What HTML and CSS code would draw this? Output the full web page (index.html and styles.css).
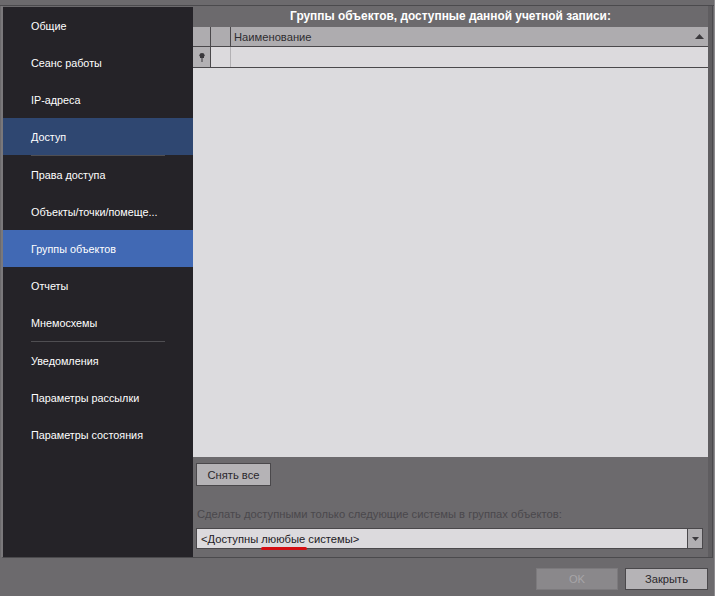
FILE: index.html
```html
<!DOCTYPE html>
<html lang="ru">
<head>
<meta charset="utf-8">
<title>Группы объектов</title>
<link rel="stylesheet" href="styles.css">
</head>
<body>
<div class="app">
  <div class="topbar"></div>
  <div class="content">
    <nav class="sidebar">
      <div class="item">Общие</div>
      <div class="item">Сеанс работы</div>
      <div class="item">IP-адреса</div>
      <div class="item active-dark">Доступ</div>
      <div class="sep"></div>
      <div class="item">Права доступа</div>
      <div class="item">Объекты/точки/помеще...</div>
      <div class="item active">Группы объектов</div>
      <div class="item">Отчеты</div>
      <div class="item">Мнемосхемы</div>
      <div class="sep"></div>
      <div class="item">Уведомления</div>
      <div class="item">Параметры рассылки</div>
      <div class="item">Параметры состояния</div>
    </nav>
    <section class="main">
      <div class="title">Группы объектов, доступные данной учетной записи:</div>
      <div class="grid">
        <div class="row head">
          <div class="cell c1"></div>
          <div class="cell c2"></div>
          <div class="cell c3"><span>Наименование</span>
            <svg class="sort" width="9" height="5" viewBox="0 0 9 5"><polygon points="0,5 9,5 4.5,0" fill="#3c3a3e"/></svg>
          </div>
        </div>
        <div class="row filter">
          <div class="cell c1">
            <svg width="6" height="9" viewBox="0 0 6 9"><ellipse cx="3" cy="2.3" rx="2.6" ry="2.2" fill="#3a383c"/><rect x="1" y="4" width="4" height="1" fill="#3a383c"/><rect x="2.5" y="4" width="1" height="5" fill="#3a383c"/></svg>
          </div>
          <div class="cell c2"></div>
          <div class="cell c3"></div>
        </div>
        <div class="body"></div>
      </div>
      <div class="lower">
        <button class="btn clear">Снять все</button>
        <div class="label">Сделать доступными только следующие системы в группах объектов:</div>
        <div class="combo">
          <div class="combo-text">&lt;Доступны <span class="spell">лююбые</span> системы&gt;</div>
          <div class="combo-btn">
            <svg width="7" height="4" viewBox="0 0 7 4"><polygon points="0,0 7,0 3.5,4" fill="#3c3a3e"/></svg>
          </div>
        </div>
      </div>
    </section>
  </div>
  <div class="footer">
    <button class="btn ok" disabled>OK</button>
    <button class="btn close">Закрыть</button>
  </div>
</div>
</body>
</html>
```
FILE: styles.css
```css
* { box-sizing: border-box; }
html, body { margin: 0; padding: 0; }
body {
  width: 715px;
  height: 596px;
  overflow: hidden;
  background: #6c6a6d;
  font-family: "Liberation Sans", Arial, sans-serif;
  font-size: 11.2px;
}
.app {
  width: 715px;
  height: 596px;
  display: flex;
  flex-direction: column;
  border-right: 1px solid #8d8b8e;
}
.topbar {
  height: 6px;
  border-bottom: 1px solid #4b4a4d;
  flex: none;
}
.content {
  height: 552px;
  flex: none;
  display: flex;
  border-left: 2px solid #7a787b;
  margin-left: 1px;
  border-right: 1px solid #4b4a4d;
  width: 712px;
  border-bottom: 1px solid #4b4a4d;
}
.sidebar {
  width: 190px;
  flex: none;
  background: #252328;
  margin-top: 1px;
  display: flex;
  flex-direction: column;
}
.item {
  height: 37px;
  flex: none;
  display: flex;
  align-items: center;
  padding-left: 28px;
  color: #ffffff;
  white-space: nowrap;
  font-size: 10.8px;
}
.item.active-dark { background: #2f4771; }
.item.active { background: #4169b4; }
.sep {
  height: 1px;
  flex: none;
  margin: 0 28px;
  background: #4f4e52;
}
.main {
  flex: 1;
  display: flex;
  flex-direction: column;
  padding-right: 4px;
  background: linear-gradient(#5f5d60, #5f5d60) no-repeat right top / 4px 100%;
}
.title {
  height: 21px;
  flex: none;
  color: #ffffff;
  font-weight: bold;
  text-align: center;
  line-height: 21px;
  font-size: 11.9px;
}
.grid {
  flex: none;
  height: 430px;
  display: flex;
  flex-direction: column;
  background: #dcdadd;
}
.row {
  display: flex;
  flex: none;
  border-bottom: 1px solid #4a484b;
}
.row.head { height: 20px; background: #aeacaf; }
.row.filter { height: 21px; background: #dcdadd; }
.cell {
  display: flex;
  align-items: center;
  flex: none;
}
.c1 { width: 18px; border-right: 1px solid #4a484b; justify-content: center; }
.c2 { width: 20px; border-right: 1px solid #4a484b; }
.c3 { flex: 1; padding-left: 3px; color: #2e2c30; justify-content: space-between; padding-right: 4px; }
.filter .c1 { background: #b3b1b4; }
.filter .c2 { border-right: 1px solid #b3b1b4; }
.body { flex: 1; background: #dcdbde; }
.lower {
  flex: 1;
  padding: 6px 4px 0 3px;
  display: flex;
  flex-direction: column;
  align-items: flex-start;
}
.btn {
  font-family: "Liberation Sans", Arial, sans-serif;
  font-size: 11.2px;
  color: #2a282c;
  background: #b5b3b6;
  border: 1px solid #4a484b;
  border-radius: 0;
  padding: 0;
}
.clear { width: 75px; height: 23px; }
.label {
  margin-top: 22px;
  line-height: 13px;
  color: #4a484c;
  margin-left: 1px;
  white-space: nowrap;
}
.combo {
  margin-top: 7px;
  width: 507px;
  height: 21px;
  display: flex;
  border: 1px solid #4a484b;
  background: #dcdadd;
}
.combo-text {
  flex: 1;
  padding-left: 4px;
  display: flex;
  align-items: center;
  color: #222024;
  white-space: pre;
}
.spell {
  position: relative;
}
.spell::after {
  content: "";
  position: absolute;
  left: 0;
  right: -2px;
  bottom: -5px;
  height: 3px;
  border-radius: 2px;
  background: #d40e12;
}
.combo-btn {
  width: 15px;
  flex: none;
  border-left: 1px solid #4a484b;
  background: #b1afb2;
  display: flex;
  align-items: center;
  justify-content: center;
}
.footer {
  flex: 1;
  display: flex;
  justify-content: flex-end;
  align-items: flex-start;
  gap: 7px;
  padding: 10px 6px 0 0;
}
.ok {
  width: 82px;
  height: 22px;
  background: #8a888b;
  border-color: #7c7a7d;
  color: #a7a5a8;
}
.close { width: 83px; height: 22px; }
```
